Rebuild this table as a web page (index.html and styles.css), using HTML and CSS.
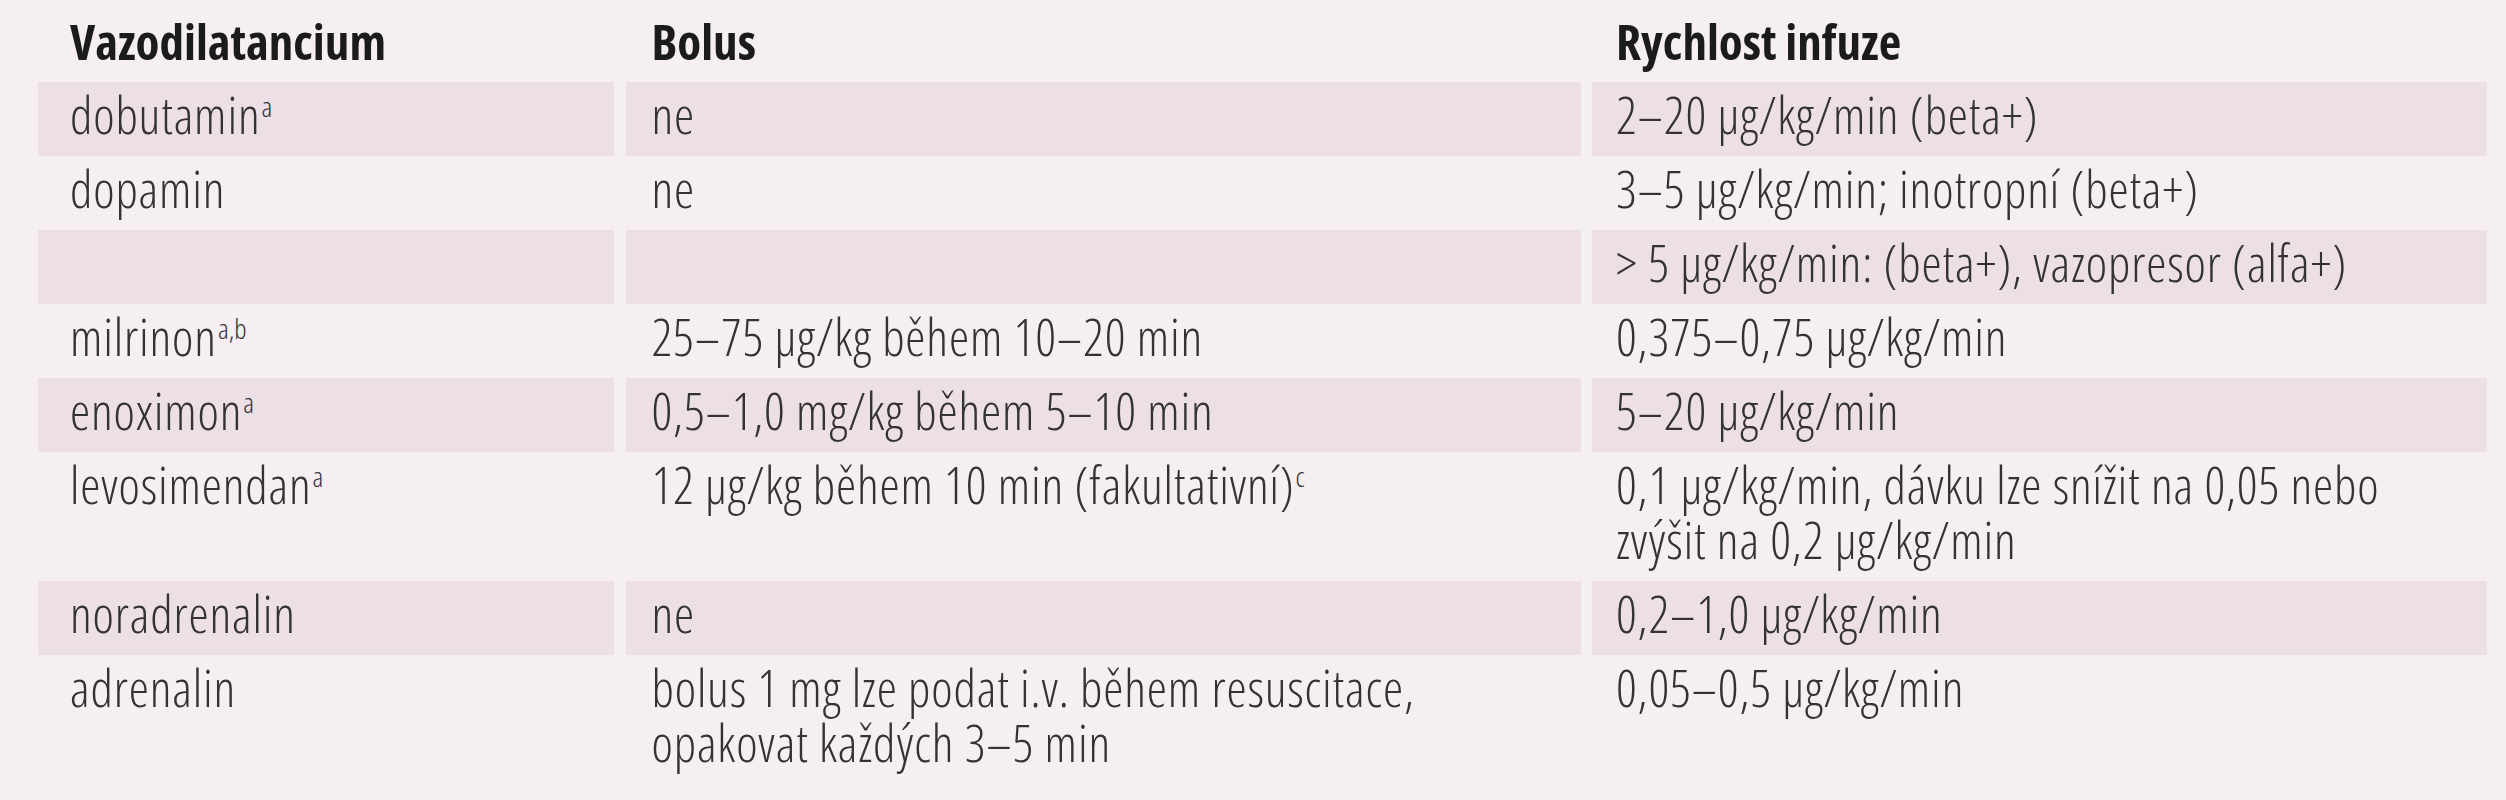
FILE: index.html
```html
<!DOCTYPE html>
<html lang="cs">
<head>
<meta charset="utf-8">
<title>Vazodilatancia</title>
<link rel="stylesheet" href="styles.css">
</head>
<body>
<div class="tbl">
  <div class="tr head">
    <div class="c c1">Vazodilatancium</div>
    <div class="c c2">Bolus</div>
    <div class="c c3">Rychlost infuze</div>
  </div>
  <div class="tr stripe">
    <div class="c c1">dobutamin<sup>a</sup></div>
    <div class="c c2">ne</div>
    <div class="c c3">2–20 µg/kg/min (beta+)</div>
  </div>
  <div class="tr">
    <div class="c c1">dopamin</div>
    <div class="c c2">ne</div>
    <div class="c c3">3–5 µg/kg/min; inotropní (beta+)</div>
  </div>
  <div class="tr stripe">
    <div class="c c1"></div>
    <div class="c c2"></div>
    <div class="c c3">&gt; 5 µg/kg/min: (beta+), vazopresor (alfa+)</div>
  </div>
  <div class="tr">
    <div class="c c1">milrinon<sup>a,b</sup></div>
    <div class="c c2">25–75 µg/kg během 10–20 min</div>
    <div class="c c3">0,375–0,75 µg/kg/min</div>
  </div>
  <div class="tr stripe">
    <div class="c c1">enoximon<sup>a</sup></div>
    <div class="c c2">0,5–1,0 mg/kg během 5–10 min</div>
    <div class="c c3">5–20 µg/kg/min</div>
  </div>
  <div class="tr">
    <div class="c c1">levosimendan<sup>a</sup></div>
    <div class="c c2">12 µg/kg během 10 min (fakultativní)<sup>c</sup></div>
    <div class="c c3">0,1 µg/kg/min, dávku lze snížit na 0,05 nebo zvýšit na 0,2 µg/kg/min</div>
  </div>
  <div class="tr stripe">
    <div class="c c1">noradrenalin</div>
    <div class="c c2">ne</div>
    <div class="c c3">0,2–1,0 µg/kg/min</div>
  </div>
  <div class="tr">
    <div class="c c1">adrenalin</div>
    <div class="c c2">bolus 1 mg lze podat i.v. během resuscitace, opakovat každých 3–5 min</div>
    <div class="c c3">0,05–0,5 µg/kg/min</div>
  </div>
</div>
</body>
</html>
```
FILE: styles.css
```css
html, body {
  margin: 0;
  background: #f6eff2;
}

body {
  font-family: "Open Sans", "DejaVu Sans", sans-serif;
  font-stretch: 75%;
  font-size: 51px;
  font-weight: 300;
  letter-spacing: 0.85px;
  color: #333333;
}

.tbl {
  padding: 8px 0 0 38px;
}

.tr {
  display: grid;
  grid-template-columns: 576px 955px 895px;
  column-gap: 11.5px;
}

.c {
  line-height: 55px;
  padding-top: 5px;
  padding-bottom: 14px;
  padding-right: 48px;
}

.c1 { padding-left: 32px; }
.c2 { padding-left: 26px; }
.c3 { padding-left: 24px; }

.stripe .c {
  background: #ecdfe5;
}

.head .c {
  font-size: 49px;
  font-weight: 700;
  letter-spacing: 0;
  color: #1b1b1b;
  padding-top: 6px;
  padding-bottom: 13px;
}

sup {
  font-size: 0.55em;
  line-height: 0;
  vertical-align: 0.6em;
  margin-left: 1px;
  letter-spacing: 0;
}
```
